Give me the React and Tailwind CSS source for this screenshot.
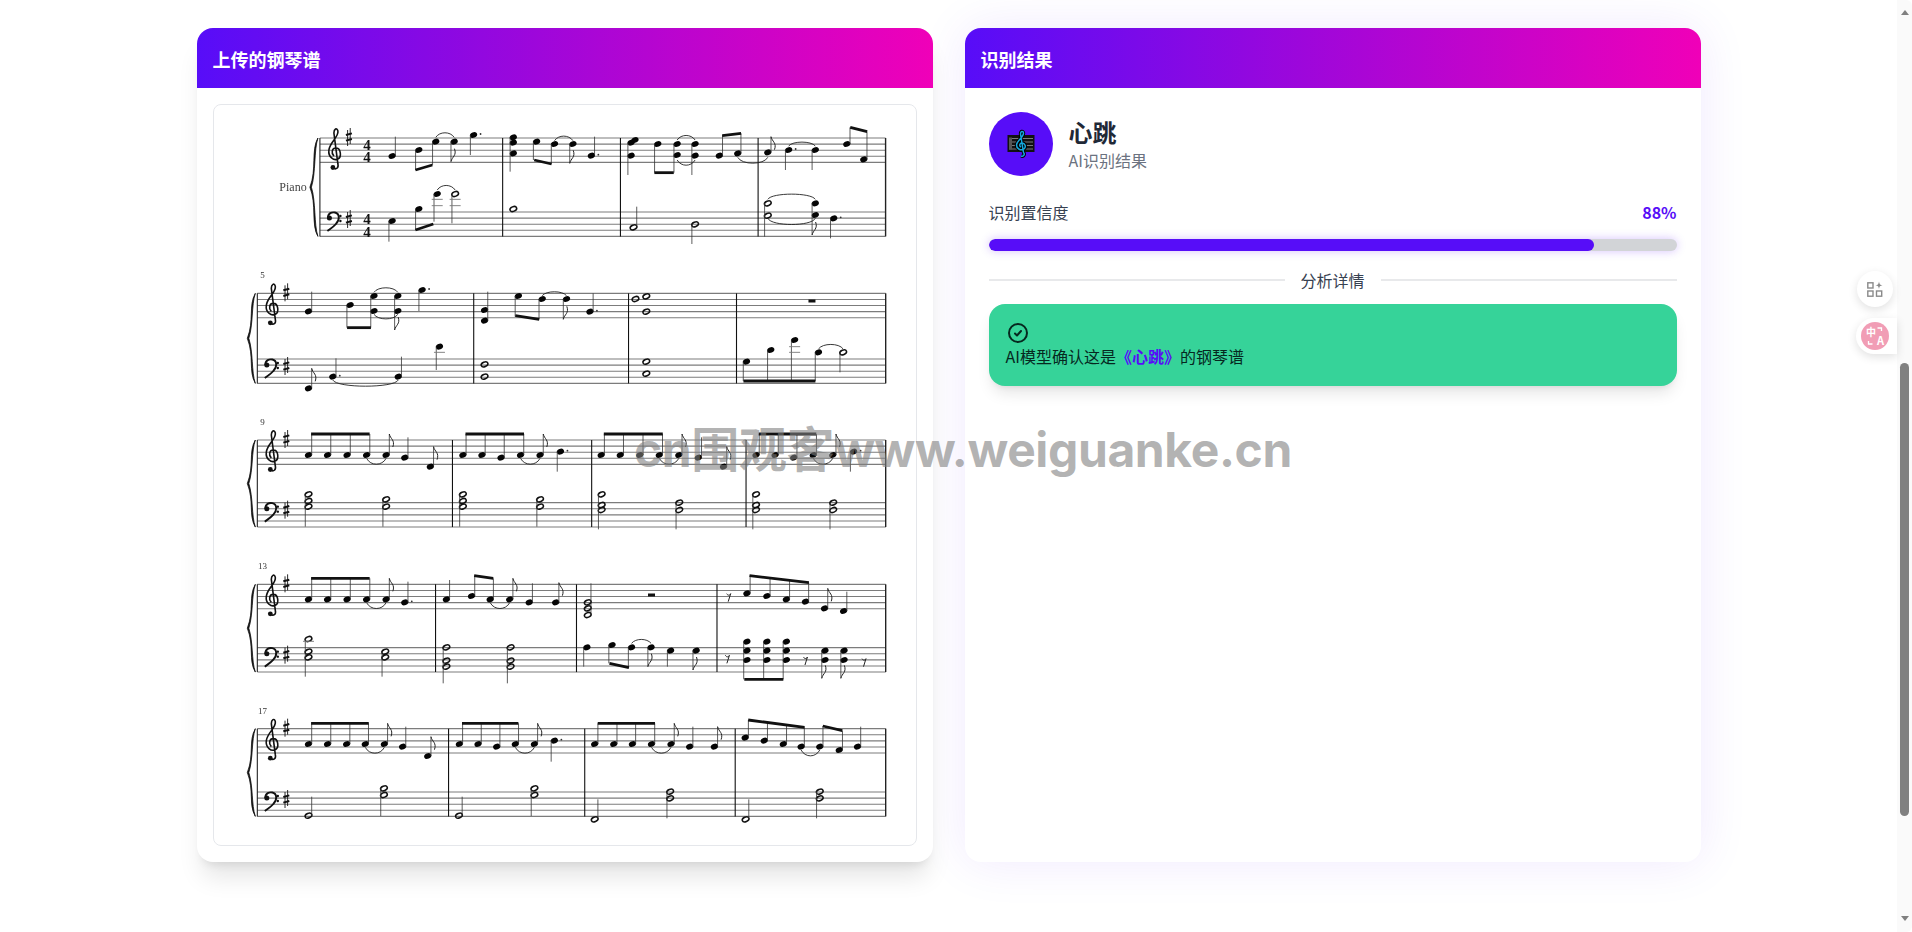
import React from 'react';

// small helpers to describe the score, all values in the source sheet coordinates
const n = (x, ys, end = null, opts = {}) => ({ k: 'n', x, ys: [].concat(ys), end, ...opts });
const b = (x1, y1, x2, y2) => ({ k: 'b', x1, y1, x2, y2 });
const t = (x1, x2, y, peak) => ({ k: 't', x1, x2, y, peak });
const l = (x, y) => ({ k: 'l', x, y });
const r = (x, y) => ({ k: 'r', x, y });
const e = (x, y) => ({ k: 'e', x, y });

const beamRun = (xs, y, end) => xs.map(x => n(x, y, end));

const systems = [
  {
    ox: 190, oy: 20, sx: 2.063, top: 354, bass: 576, x0: 268, x1: 1435,
    bars: [645, 888, 1172], time: true,
    items: [
      n(417, 408, 350), n(472, 390, 450), n(507, 365, 435), b(465, 450, 500, 435), n(545, 365, 425, { f: 1 }), t(507, 545, 352, 338),
      n(585, 345, 405, { d: 1 }),
      n(667, [352, 368, 400], 455), n(715, 365, 420), n(752, 372, 430), b(710, 420, 746, 432), n(790, 372, 430, { f: 1 }), t(752, 790, 362, 348),
      n(828, 407, 350, { d: 1 }),
      n(910, [368, 407], 465), n(918, 360), n(965, 372, 458), n(1005, [372, 405], 458), b(958, 458, 998, 458),
      n(1042, [372, 407], 465), t(1005, 1042, 360, 346), t(1005, 1042, 420, 436),
      n(1092, 407, 345), n(1130, 400, 340), b(1098, 347, 1137, 340), t(1130, 1192, 412, 430),
      n(1192, 397, 350, { f: 1 }), n(1235, 390, 450, { d: 1 }), n(1290, 390, 450), t(1235, 1290, 378, 366),
      n(1355, 372, 322), n(1390, 418, 335), b(1362, 322, 1397, 335),
      n(417, 603, 665), n(472, 567, 630), n(510, 522, 605), b(465, 630, 502, 612), n(547, 522, 610, { o: 1 }), t(510, 547, 510, 496),
      l(510, 538), l(510, 557), l(547, 538), l(547, 557),
      n(667, 567, null, { o: 1 }),
      n(915, 622, 560, { o: 1 }), n(1042, 613, 672, { o: 1 }),
      n(1192, [550, 587], 650, { o: 1 }), n(1290, [550, 585], 645, { f: 1 }), n(1328, 595, 655, { d: 1 }),
      t(1192, 1290, 538, 522), t(1192, 1290, 595, 614),
    ],
  },
  {
    ox: 230, oy: 265, sx: 2.306, top: 85, bass: 282, x0: 63, x1: 1512,
    bars: [562, 919, 1168], num: '5', numY: 30,
    items: [
      n(181, 139, 80), n(277, 120, 188), n(332, [93, 138], 188), b(270, 188, 325, 188),
      n(387, [93, 138], 195, { f: 1 }), t(332, 387, 82, 68), t(332, 387, 148, 162), n(443, 75, 138, { d: 1 }),
      n(587, [135, 167], 80), n(665, 93, 155), n(720, 102, 163), b(658, 152, 713, 163), n(776, 102, 163, { f: 1 }), t(720, 776, 92, 80),
      n(830, 140, 85, { d: 1 }),
      n(935, 102, null, { o: 1 }), n(960, [94, 140], null, { o: 1 }), r(1342, 108),
      n(181, 370, 310, { f: 1 }), n(237, 335, 280, { d: 1 }), n(388, 335, 275), t(237, 388, 345, 364),
      n(483, 245, 315), l(483, 262),
      n(587, [298, 335], null, { o: 1 }), n(960, [290, 326], null, { o: 1 }),
      n(1191, 290, 348), n(1247, 255, 348), n(1302, 225, 348), n(1357, 262, 348), b(1184, 348, 1350, 348),
      l(1302, 245), l(1302, 262), n(1414, 262, 322, { o: 1 }), t(1357, 1414, 252, 238),
    ],
  },
  {
    ox: 230, oy: 400, sx: 2.306, top: 120, bass: 308, x0: 63, x1: 1512,
    bars: [513, 834, 1190], num: '9', numY: 65,
    items: [
      ...beamRun([181, 225, 270, 315], 165, 102), b(187, 102, 322, 102), n(360, 165, 102, { f: 1 }), t(315, 360, 175, 193),
      n(403, 173, 112), n(462, 200, 140, { f: 1 }),
      ...beamRun([537, 581], 165, 102), n(625, 173, 102), n(670, 165, 102), b(543, 102, 678, 102), n(715, 165, 102, { f: 1 }), t(670, 715, 175, 193),
      n(762, 155, 215, { d: 1 }),
      ...beamRun([856, 900, 945, 990], 165, 102), b(862, 102, 998, 102), n(1035, 165, 102, { f: 1 }), t(990, 1035, 175, 193),
      n(1080, 173, 112), n(1138, 200, 140, { f: 1 }),
      ...beamRun([1213, 1257], 165, 102), n(1300, 173, 102), n(1345, 165, 102), b(1219, 102, 1352, 102), n(1390, 165, 102, { f: 1 }), t(1345, 1390, 175, 193),
      n(1438, 155, 215, { d: 1 }),
      n(181, [283, 303, 320], 380, { o: 1 }), n(360, [298, 320], 380, { o: 1 }),
      n(537, [283, 303, 320], 380, { o: 1 }), n(715, [298, 320], 380, { o: 1 }),
      n(857, [283, 315, 330], 388, { o: 1 }), n(1036, [308, 330], 388, { o: 1 }),
      n(1213, [283, 315, 330], 388, { o: 1 }), n(1391, [308, 330], 388, { o: 1 }),
    ],
  },
  {
    ox: 230, oy: 400, sx: 2.306, top: 553, bass: 743, x0: 63, x1: 1512,
    bars: [474, 799, 1123], num: '13', numY: 498,
    items: [
      ...beamRun([181, 225, 270, 315], 598, 535), b(187, 535, 322, 535), n(360, 598, 535, { f: 1 }), t(315, 360, 608, 626),
      n(403, 607, 545, { d: 1 }),
      n(499, 598, 540), n(557, 588, 527), n(600, 598, 535), b(563, 527, 607, 535), n(645, 598, 535, { f: 1 }), t(600, 645, 608, 626),
      n(690, 607, 550), n(751, 607, 548, { f: 1 }),
      n(825, [607, 625, 645], 550, { o: 1 }), r(972, 585),
      e(1150, 590), n(1192, 580, 527), n(1238, 588, 535), n(1283, 598, 542), n(1327, 605, 548), b(1198, 527, 1335, 548),
      n(1371, 625, 565, { f: 1 }), n(1415, 633, 575),
      n(181, [717, 755, 772], 830, { o: 1 }), l(181, 724), n(358, [755, 772], 830, { o: 1 }),
      n(499, [742, 782, 800], 850, { o: 1 }), n(647, [742, 782, 800], 850, { o: 1 }),
      n(823, 742, 800), n(881, 735, 790), n(926, 742, 803), b(875, 790, 920, 803), n(971, 742, 800, { f: 1 }), t(926, 971, 730, 718),
      n(1016, 752, 800), n(1075, 752, 810, { f: 1 }),
      e(1147, 775), n(1192, [725, 752, 780], 838), n(1238, [725, 752, 780], 838), n(1283, [725, 752, 780], 838), b(1186, 838, 1276, 838),
      e(1327, 780), n(1372, [752, 780], 835, { f: 1 }), n(1416, [752, 780], 835, { f: 1 }), e(1462, 785),
    ],
  },
  {
    ox: 230, oy: 690, sx: 2.306, top: 116, bass: 306, x0: 63, x1: 1512,
    bars: [504, 818, 1165], num: '17', numY: 62,
    items: [
      ...beamRun([181, 225, 269, 312], 162, 100), b(187, 100, 320, 100), n(356, 162, 100, { f: 1 }), t(312, 356, 172, 190),
      n(398, 170, 110), n(456, 198, 140, { f: 1 }),
      ...beamRun([529, 572], 162, 100), n(615, 170, 100), n(658, 162, 100), b(535, 100, 665, 100), n(702, 162, 100, { f: 1 }), t(658, 702, 172, 190),
      n(748, 152, 215, { d: 1 }),
      ...beamRun([841, 885, 928, 972], 162, 100), b(848, 100, 980, 100), n(1017, 162, 100, { f: 1 }), t(972, 1017, 172, 190),
      n(1060, 170, 110), n(1117, 170, 110, { f: 1 }),
      n(1188, 143, 90), n(1232, 152, 97), n(1276, 162, 105), n(1317, 170, 112), b(1195, 90, 1325, 112),
      n(1360, 170, 108), n(1405, 180, 122), b(1367, 108, 1412, 122), t(1317, 1360, 180, 198), n(1447, 170, 110),
      n(181, 377, 320, { o: 1 }), n(355, [295, 315], 378, { o: 1 }),
      n(528, 377, 320, { o: 1 }), n(702, [295, 315], 378, { o: 1 }),
      n(841, 388, 328, { o: 1 }), n(1015, [305, 325], 385, { o: 1 }),
      n(1189, 388, 328, { o: 1 }), n(1360, [305, 325], 385, { o: 1 }),
    ],
  },
];

const Sharp = ({ x, y }) => (
  <g stroke="#111">
    <path d={`M${x - 1.3} ${y - 7}V${y + 9}M${x + 1.3} ${y - 9}V${y + 7}`} strokeWidth="0.9" />
    <path d={`M${x - 3} ${y - 2}L${x + 3} ${y - 3.6}M${x - 3} ${y + 3.6}L${x + 3} ${y + 2}`} strokeWidth="2" />
  </g>
);

const StaffSystem = ({ s }) => {
  const px = v => s.ox + v / s.sx;
  const py = v => s.oy + v / 3;
  const top = py(s.top);
  const bass = py(s.bass);
  const gap = 6.1;
  const x0 = px(s.x0);
  const x1 = px(s.x1);
  const bottom = bass + gap * 4;
  const mid = (top + bottom) / 2;

  return (
    <g>
      {[top, bass].map(y =>
        [0, 1, 2, 3, 4].map(i => (
          <line key={`${y}-${i}`} x1={x0} x2={x1} y1={y + i * gap} y2={y + i * gap} stroke="#7c7c7c" strokeWidth="1.1" />
        ))
      )}
      <line x1={x0} x2={x0} y1={top} y2={bottom} stroke="#222" strokeWidth="1.1" />
      <line x1={x1} x2={x1} y1={top} y2={bottom} stroke="#222" strokeWidth="1.4" />
      {s.bars.map(bar => (
        <line key={bar} x1={px(bar)} x2={px(bar)} y1={top} y2={bottom} stroke="#111" strokeWidth="1.1" />
      ))}

      {/* brace */}
      <path
        d={`M${x0 - 2} ${top} C${x0 - 9} ${top + 12} ${x0 - 3} ${mid - 18} ${x0 - 10} ${mid} C${x0 - 3} ${mid + 18} ${x0 - 9} ${bottom - 12} ${x0 - 2} ${bottom} C${x0 - 6} ${bottom - 12} ${x0 - 4} ${mid + 14} ${x0 - 8.5} ${mid} C${x0 - 4} ${mid - 14} ${x0 - 6} ${top + 12} ${x0 - 2} ${top}Z`}
        fill="#111"
        stroke="#111"
        strokeWidth="0.8"
      />

      {/* treble clef */}
      <g transform={`translate(${x0 + 8} ${top - 10})`} fill="none" stroke="#111" strokeWidth="1.6">
        <path d="M5.5 40C8 42 11 40 10 36L6 5C6 1 9 -1 10 3C11 9 2 14 1 22C0 29 6 33 10 31C14 29 13 20 8 20C4 20 3 25 6 28" />
        <circle cx="5" cy="39.5" r="2.4" fill="#111" stroke="none" />
      </g>
      {/* bass clef */}
      <g transform={`translate(${x0 + 7} ${bass})`} fill="none" stroke="#111" strokeWidth="1.9">
        <circle cx="2.5" cy="6" r="2.5" fill="#111" stroke="none" />
        <path d="M1 6C1 1 5 0 8 0.5C13 1.5 13 8 9 12C6.5 15 3 17 0.5 19" />
        <circle cx="13.5" cy="4" r="1.2" fill="#111" stroke="none" />
        <circle cx="13.5" cy="9" r="1.2" fill="#111" stroke="none" />
      </g>
      <Sharp x={x0 + 29} y={top - 1} />
      <Sharp x={x0 + 29} y={bass + 7} />

      {s.time && (
        <g fontFamily="'Liberation Serif', serif" fontWeight="700" fontSize="15" textAnchor="middle" fill="#111">
          <text x={x0 + 47} y={top + 12}>4</text>
          <text x={x0 + 47} y={top + 24}>4</text>
          <text x={x0 + 47} y={bass + 12}>4</text>
          <text x={x0 + 47} y={bass + 25}>4</text>
          <text x="293" y="191" fontSize="12" fontWeight="400" fill="#444">Piano</text>
        </g>
      )}
      {s.num && (
        <text x="262.5" y={py(s.numY) + 3} fontFamily="'Liberation Serif', serif" fontSize="9" textAnchor="middle" fill="#333">
          {s.num}
        </text>
      )}

      {s.items.map((it, i) => {
        if (it.k === 'b') {
          return <line key={i} x1={px(it.x1)} y1={py(it.y1)} x2={px(it.x2)} y2={py(it.y2)} stroke="#111" strokeWidth="2.8" />;
        }
        if (it.k === 't') {
          const a = px(it.x1);
          const c = px(it.x2);
          const span = py(it.peak) - py(it.y);
          return (
            <path key={i} d={`M${a} ${py(it.y)}C${a + 4} ${py(it.y) + span * 1.3} ${c - 4} ${py(it.y) + span * 1.3} ${c} ${py(it.y)}`} fill="none" stroke="#222" strokeWidth="0.9" />
          );
        }
        if (it.k === 'l') {
          return <line key={i} x1={px(it.x) - 5.5} x2={px(it.x) + 5.5} y1={py(it.y)} y2={py(it.y)} stroke="#777" strokeWidth="0.9" />;
        }
        if (it.k === 'r') {
          return <rect key={i} x={px(it.x) - 3.5} y={py(it.y) - 1.5} width="7" height="3" fill="#111" />;
        }
        if (it.k === 'e') {
          const x = px(it.x);
          const y = py(it.y);
          return <path key={i} d={`M${x - 2} ${y - 3}C${x - 1} ${y - 1} ${x + 1} ${y - 1} ${x + 2} ${y - 3}L${x - 0.5} ${y + 5}`} fill="none" stroke="#222" strokeWidth="1" />;
        }
        const x = px(it.x);
        const ys = it.ys.map(py);
        const up = it.end !== null && py(it.end) < ys[0];
        const sxp = up ? x + 3.2 : x - 3.2;
        const ey = it.end !== null ? py(it.end) : null;
        return (
          <g key={i}>
            {ys.map(y => (
              <ellipse
                key={y}
                cx={x}
                cy={y}
                rx={it.o ? 3.5 : 3.7}
                ry={it.o ? 2.3 : 2.8}
                transform={`rotate(-22 ${x} ${y})`}
                fill={it.o ? 'none' : '#050505'}
                stroke={it.o ? '#111' : 'none'}
                strokeWidth="1.5"
              />
            ))}
            {ey !== null && <line x1={sxp} x2={sxp} y1={up ? Math.max(...ys) : Math.min(...ys)} y2={ey} stroke="#333" strokeWidth="0.8" />}
            {it.f && ey !== null && (
              <path
                d={up
                  ? `M${sxp} ${ey}C${sxp + 1} ${ey + 5} ${sxp + 6} ${ey + 6} ${sxp + 3.5} ${ey + 13}`
                  : `M${sxp} ${ey}C${sxp + 1} ${ey - 5} ${sxp + 6} ${ey - 6} ${sxp + 3.5} ${ey - 13}`}
                fill="none"
                stroke="#222"
                strokeWidth="1"
              />
            )}
            {it.d && <circle cx={x + 7} cy={ys[0] - 1} r="0.9" fill="#333" />}
          </g>
        );
      })}
    </g>
  );
};

const ScoreSheet = () => (
  <svg viewBox="214 105 702 740" className="block w-full h-[740px] blur-[0.4px]">
    {systems.map((s, i) => (
      <StaffSystem key={i} s={s} />
    ))}
  </svg>
);

const ClefEmoji = () => (
  <svg width="30" height="30" viewBox="0 0 30 30" fill="none">
    <rect x="1.5" y="6" width="27" height="17" fill="#111" />
    <path d="M3 9.5H27M3 13H27M3 16.5H27M3 20H27" stroke="#7a7a7a" strokeWidth="1" />
    <rect x="3" y="8.5" width="3" height="12" fill="#555" />
    <path d="M15 27C18 28 19 25 17.5 23.5L14.5 5C14.5 2 17 1.5 17.5 4C18 8 11 11 10.5 16C10.5 20 15 22 18 20C20.5 18 19 14 16 14C13.5 14 13 17 15 18" stroke="#000" strokeWidth="3.4" />
    <path d="M15 27C18 28 19 25 17.5 23.5L14.5 5C14.5 2 17 1.5 17.5 4C18 8 11 11 10.5 16C10.5 20 15 22 18 20C20.5 18 19 14 16 14C13.5 14 13 17 15 18" stroke="#14a8dc" strokeWidth="1.5" />
  </svg>
);

const CardHeader = ({ title }) => (
  <div className="h-[60px] px-4 pt-px flex items-center bg-linear-to-r/srgb from-[#570df8] to-[#f000b8] text-white text-lg font-bold">
    {title}
  </div>
);

const FakeScrollbar = () => (
  <div className="w-[15px] h-full shrink-0 bg-[#fafafa] rounded-r-md flex flex-col items-center relative">
    <div className="mt-[10px] w-0 h-0 border-x-[4.5px] border-x-transparent border-b-[5px] border-b-[#808080]" />
    <div className="absolute top-[363px] left-[3px] w-[9px] h-[453px] bg-[#808080] rounded-full" />
    <div className="mt-auto mb-[11px] w-0 h-0 border-x-[4.5px] border-x-transparent border-t-[5px] border-t-[#808080]" />
  </div>
);

export default function App() {
  return (
    <div className="relative flex w-full h-[932px] overflow-hidden bg-white text-[#1f2937] font-['Noto_Sans_CJK_SC',sans-serif]">
      <main className="flex-1 min-w-0 pt-7">
        <div className="mx-auto max-w-[1536px] px-4 grid grid-cols-2 gap-8 h-[834px]">
          {/* uploaded score */}
          <section className="relative z-10 bg-white rounded-2xl overflow-hidden shadow-xl">
            <CardHeader title="上传的钢琴谱" />
            <div className="p-4">
              <div className="border border-[#e5e7eb] rounded-lg overflow-hidden">
                <ScoreSheet />
              </div>
            </div>
          </section>

          {/* result */}
          <section className="bg-white rounded-2xl overflow-hidden shadow-[0_0_50px_rgba(87,13,248,0.09)]">
            <CardHeader title="识别结果" />
            <div className="p-6">
              <div className="flex items-center gap-4">
                <div className="w-16 h-16 rounded-full bg-[#570df8] flex items-center justify-center">
                  <ClefEmoji />
                </div>
                <div>
                  <h2 className="text-2xl font-bold leading-8">心跳</h2>
                  <p className="text-base leading-6 text-[#6b7280]">AI识别结果</p>
                </div>
              </div>

              <div className="mt-6 flex items-center justify-between text-base leading-6">
                <span className="text-[#374151]">识别置信度</span>
                <span className="font-bold text-[#570df8]">88%</span>
              </div>
              <div className="mt-[15px] h-3 rounded-full bg-[#d2d4d7] overflow-hidden shadow-[0_0_10px_rgba(87,13,248,0.25)]">
                <div className="h-full rounded-full bg-[#570df8]" style={{ width: '88%' }} />
              </div>
              <div className="mt-[17px] flex items-center gap-4 text-base leading-6 text-[#374151]">
                <div className="flex-1 h-0.5 bg-[#e8e9eb]" />
                <span>分析详情</span>
                <div className="flex-1 h-0.5 bg-[#e8e9eb]" />
              </div>

              <div className="mt-3 rounded-2xl bg-[#36d399] p-[17px] h-[82px] shadow-lg text-[#06281f]">
                <svg width="24" height="24" viewBox="0 0 24 24" fill="none" stroke="currentColor" strokeWidth="2" strokeLinecap="round" strokeLinejoin="round">
                  <path d="M9 12.5l2 2 4-4.5" />
                  <circle cx="12" cy="12" r="9" />
                </svg>
                <p className="text-base leading-[22px]">
                  AI模型确认这是<span className="font-semibold text-[#570df8]">《心跳》</span>的钢琴谱
                </p>
              </div>
            </div>
          </section>
        </div>
      </main>

      <FakeScrollbar />

      {/* floating browser extension buttons */}
      <button className="absolute left-[1857px] top-[271px] w-9 h-9 rounded-full bg-white shadow-[0_3px_10px_rgba(0,0,0,0.12)] flex items-center justify-center">
        <svg width="16" height="16" viewBox="0 0 16 16" fill="none" stroke="#8a8a8a" strokeWidth="1.4">
          <rect x="0.8" y="1.8" width="5.2" height="5.2" />
          <rect x="0.8" y="10" width="5.2" height="5.2" />
          <rect x="9.5" y="10" width="5.2" height="5.2" />
          <path d="M12 0.5C12.3 3 13 3.9 15.5 4.3C13 4.7 12.3 5.6 12 8C11.7 5.6 11 4.7 8.5 4.3C11 3.9 11.7 3 12 0.5Z" fill="#8a8a8a" stroke="none" />
        </svg>
      </button>
      <div className="absolute left-[1856px] top-[318px] w-[41px] h-9 rounded-l-full bg-white shadow-[0_3px_10px_rgba(0,0,0,0.12)] flex items-center pl-[5px]">
        <div className="relative w-7 h-7 rounded-full bg-[#f19db5] text-white font-bold">
          <span className="absolute left-[5px] top-[5px] text-[10px] leading-[10px]">中</span>
          <span className="absolute right-[5px] bottom-[4px] text-[11px] leading-[11px]">A</span>
          <svg className="absolute inset-0" width="28" height="28" viewBox="0 0 28 28" fill="none" stroke="white" strokeWidth="1.3">
            <path d="M16.5 6H20.5V9" />
            <path d="M11.5 22H7.5V19" />
          </svg>
        </div>
      </div>

      {/* watermark laid over the page */}
      <div className="absolute z-20 left-[634px] top-[420px] pointer-events-none whitespace-nowrap text-[48px] leading-[60px] font-bold tracking-[-0.4px] text-[rgba(128,128,128,0.6)] font-['Inter','Noto_Sans_CJK_SC',sans-serif]">
        cn围观客www.weiguanke.cn
      </div>
    </div>
  );
}
